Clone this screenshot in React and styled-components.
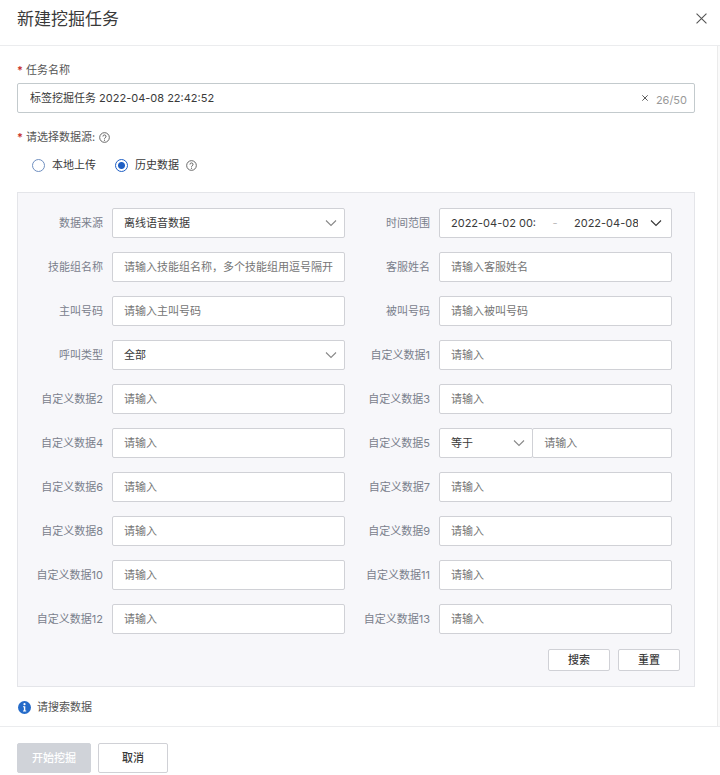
import React, { useState } from "react";
import styled, { createGlobalStyle } from "styled-components";

const GlobalStyle = createGlobalStyle`
  *, *::before, *::after { box-sizing: border-box; }
  body {
    margin: 0;
    background: #fff;
    color: #3a3a3a;
    font-family: Inter, "Noto Sans CJK SC", sans-serif;
    font-size: 11px;
    line-height: 16px;
  }
  input, select, button { font: inherit; color: inherit; margin: 0; }
`;

const Dialog = styled.section`
  display: flex;
  flex-direction: column;
  min-height: 100vh;
`;

const Header = styled.header`
  display: flex;
  align-items: center;
  justify-content: space-between;
  height: 46px;
  padding: 0 13px 8px 17px;
  border-bottom: 1px solid #ebecee;
`;

const Title = styled.h1`
  margin: 0;
  font-size: 17px;
  font-weight: 400;
  line-height: 24px;
`;

const IconButton = styled.button`
  display: flex;
  padding: 0;
  border: 0;
  background: none;
  color: #555;
  cursor: pointer;
`;

const Main = styled.div`
  display: flex;
  flex: 1;
`;

const Form = styled.form`
  flex: 1;
  min-width: 0;
  padding: 16px 22px 11px 17px;
`;

const ScrollTrack = styled.div`
  width: 3px;
  background: #fafafa;
  border-left: 1px solid #ebebeb;
`;

const RequiredLabel = styled.label`
  display: flex;
  align-items: center;
  gap: 4px;
  color: #555;

  &::before {
    content: "*";
    width: 5px;
    color: #c8342b;
    font-weight: 600;
  }
`;

const HelpIcon = styled.svg`
  width: 11px;
  height: 11px;
  flex: none;
  color: #555;
`;

const Frame = styled.div`
  display: flex;
  align-items: center;
  height: 30px;
  border: 1px solid ${(p) => (p.$strong ? "#c3cacd" : "#d0d1d6")};
  border-radius: 2px;
  background: #fff;
  padding: 0 11px;
`;

const NameFrame = styled(Frame)`
  margin: 5px 0 16px;
  padding: 0 7px 0 12px;
`;

const BareInput = styled.input`
  flex: ${(p) => p.$share || 1} 1 0;
  min-width: 0;
  padding: 0;
  border: 0;
  outline: 0;
  background: none;
`;

const Counter = styled.span`
  margin: 4px 0 0 8px;
  color: #999;
`;

const RadioRow = styled.div`
  display: flex;
  align-items: center;
  gap: 19px;
  margin: 12px 0 19px;
  padding-left: 15px;
`;

const RadioGroup = styled.div`
  display: flex;
  align-items: center;
  gap: 7px;
`;

const RadioLabel = styled.label`
  display: flex;
  align-items: center;
  gap: 7px;
`;

const Radio = styled.input`
  appearance: none;
  width: 13px;
  height: 13px;
  border: 1px solid #6f8fc0;
  border-radius: 50%;
  background: #fff;

  &:checked {
    border-color: #1f5fc4;
    background: radial-gradient(circle, #1f5fc4 3px, #fff 4px);
  }
`;

const Panel = styled.div`
  padding: 15px 0 15px;
  border: 1px solid #e4e5e9;
  background: #f7f7fa;
`;

const FieldGrid = styled.div`
  display: grid;
  grid-template-columns: repeat(2, minmax(0, 1fr));
  row-gap: 14px;
  padding-right: 22px;
`;

const Field = styled.div`
  display: grid;
  grid-template-columns: 85px minmax(0, 1fr);
  column-gap: 9px;
  align-items: center;
`;

const FieldLabel = styled.label`
  color: #7a808c;
  text-align: right;
  white-space: nowrap;
`;

const TextInput = styled.input`
  width: 100%;
  min-width: 0;
  height: 30px;
  padding: 0 10px 0 11px;
  border: 1px solid #d0d1d6;
  border-radius: 2px;
  background: #fff;

  &::placeholder { color: #757575; opacity: 1; }
`;

const SelectBox = styled.div`
  position: relative;
  min-width: 0;
`;

const Select = styled.select`
  appearance: none;
  display: block;
  width: 100%;
  height: 30px;
  padding: 0 26px 0 11px;
  border: 1px solid #d0d1d6;
  border-radius: 2px;
  background: #fff;
`;

const Chevron = styled.svg`
  width: 12px;
  height: 8px;
  flex: none;
  color: ${(p) => (p.$dark ? "#333" : "#888")};
`;

const SelectChevron = styled(Chevron)`
  position: absolute;
  right: 8px;
  top: 11px;
  pointer-events: none;
`;

const Combined = styled.div`
  display: grid;
  grid-template-columns: minmax(0, 2fr) minmax(0, 3fr);

  ${SelectBox} { margin-right: -1px; }
`;

const RangeFrame = styled(Frame)`
  padding-right: 9px;
`;

const Dash = styled.span`
  width: 38px;
  color: #bbb;
  text-align: center;
`;

const RangeChevron = styled(Chevron)`
  margin-left: 12px;
`;

const Actions = styled.div`
  display: flex;
  justify-content: flex-end;
  gap: 8px;
  margin-top: 15px;
  padding-right: 14px;
`;

const Button = styled.button`
  height: ${(p) => (p.$small ? 22 : 30)}px;
  padding: 0 ${(p) => (p.$small ? 19 : 23)}px;
  border: 1px solid #d0d1d6;
  border-radius: 2px;
  background: #fff;
  font-weight: 500;
  line-height: 16px;
  cursor: pointer;

  &:disabled {
    padding: 0 14px;
    border-color: #d0d3d9;
    background: #d0d3d9;
    color: #fff;
    cursor: default;
  }
`;

const Notice = styled.p`
  display: flex;
  align-items: center;
  gap: 6px;
  margin: 12px 0 0;
  padding-left: 1px;
  color: #555;
`;

const Footer = styled.footer`
  display: flex;
  gap: 7px;
  padding: 16px 17px 2px;
  border-top: 1px solid #ebecee;
`;

const chevronPath = <path d="M1 1.5 6 6.5 11 1.5" fill="none" stroke="currentColor" strokeWidth="1.1" />;

function Cross({ size, width }) {
  return (
    <svg width={size} height={size} viewBox="0 0 10 10" aria-hidden="true">
      <path d="M.5.5 9.5 9.5M9.5.5.5 9.5" fill="none" stroke="currentColor" strokeWidth={width} />
    </svg>
  );
}

function Help() {
  return (
    <HelpIcon viewBox="0 0 10 10" role="img" aria-label="帮助">
      <circle cx="5" cy="5" r="4.4" fill="none" stroke="currentColor" strokeWidth=".8" />
      <path d="M3.600 4.100a1.400 1.400 0 1 1 2 1.200c-.4.2-.6.4-.6.9" fill="none" stroke="currentColor" strokeWidth=".8" />
      <circle cx="5" cy="7.4" r=".5" fill="currentColor" />
    </HelpIcon>
  );
}

function SelectField({ id, options, label }) {
  return (
    <SelectBox>
      <Select id={id} aria-label={label}>
        {options.map((o) => <option key={o}>{o}</option>)}
      </Select>
      <SelectChevron viewBox="0 0 12 8" aria-hidden="true">{chevronPath}</SelectChevron>
    </SelectBox>
  );
}

function DateRange({ id }) {
  return (
    <RangeFrame>
      <BareInput id={id} $share={85} defaultValue="2022-04-02 00:00:00" />
      <Dash>-</Dash>
      <BareInput $share={64} aria-label="结束时间" defaultValue="2022-04-08 23:59:59" />
      <RangeChevron $dark viewBox="0 0 12 8" aria-hidden="true">{chevronPath}</RangeChevron>
    </RangeFrame>
  );
}

const fields = [
  { label: "数据来源", options: ["离线语音数据"] },
  { label: "时间范围", range: true },
  { label: "技能组名称", hint: "请输入技能组名称，多个技能组用逗号隔开" },
  { label: "客服姓名", hint: "请输入客服姓名" },
  { label: "主叫号码", hint: "请输入主叫号码" },
  { label: "被叫号码", hint: "请输入被叫号码" },
  { label: "呼叫类型", options: ["全部"] },
  ...Array.from({ length: 13 }, (_, i) => ({
    label: `自定义数据${i + 1}`,
    hint: "请输入",
    compare: i === 4,
  })),
];

function FieldControl({ field, id }) {
  if (field.options) return <SelectField id={id} options={field.options} />;
  if (field.range) return <DateRange id={id} />;
  if (field.compare) {
    return (
      <Combined>
        <SelectField label="比较方式" options={["等于"]} />
        <TextInput id={id} placeholder={field.hint} />
      </Combined>
    );
  }
  return <TextInput id={id} placeholder={field.hint} />;
}

export default function App() {
  const [name, setName] = useState("标签挖掘任务 2022-04-08 22:42:52");
  return (
    <>
      <GlobalStyle />
      <Dialog>
        <Header>
          <Title>新建挖掘任务</Title>
          <IconButton type="button" aria-label="关闭"><Cross size={11} width="1" /></IconButton>
        </Header>
        <Main>
          <Form onSubmit={(e) => e.preventDefault()}>
            <RequiredLabel htmlFor="task-name">任务名称</RequiredLabel>
            <NameFrame $strong>
              <BareInput id="task-name" value={name} maxLength={50} onChange={(e) => setName(e.target.value)} />
              <IconButton type="button" aria-label="清空" onClick={() => setName("")}><Cross size={6} width="1.6" /></IconButton>
              <Counter>{name.length}/50</Counter>
            </NameFrame>
            <RequiredLabel as="div" id="source-label">请选择数据源: <Help /></RequiredLabel>
            <RadioRow role="radiogroup" aria-labelledby="source-label">
              <RadioLabel><Radio type="radio" name="source" />本地上传</RadioLabel>
              <RadioGroup>
                <RadioLabel><Radio type="radio" name="source" defaultChecked />历史数据</RadioLabel>
                <Help />
              </RadioGroup>
            </RadioRow>
            <Panel>
              <FieldGrid>
                {fields.map((f, i) => (
                  <Field key={f.label}>
                    <FieldLabel htmlFor={`field-${i}`}>{f.label}</FieldLabel>
                    <FieldControl field={f} id={`field-${i}`} />
                  </Field>
                ))}
              </FieldGrid>
              <Actions>
                <Button $small type="submit">搜索</Button>
                <Button $small type="reset">重置</Button>
              </Actions>
            </Panel>
            <Notice>
              <svg width="13" height="13" viewBox="0 0 13 13" aria-hidden="true">
                <circle cx="6.5" cy="6.5" r="6.5" fill="#256bc9" />
                <circle cx="6.5" cy="3.2" r="1.1" fill="#fff" />
                <path d="M5 5.3h2.300v4.300h.9v1H5v-1h.9V6.300H5z" fill="#fff" />
              </svg>
              请搜索数据
            </Notice>
          </Form>
          <ScrollTrack />
        </Main>
        <Footer>
          <Button type="button" disabled>开始挖掘</Button>
          <Button type="button">取消</Button>
        </Footer>
      </Dialog>
    </>
  );
}
